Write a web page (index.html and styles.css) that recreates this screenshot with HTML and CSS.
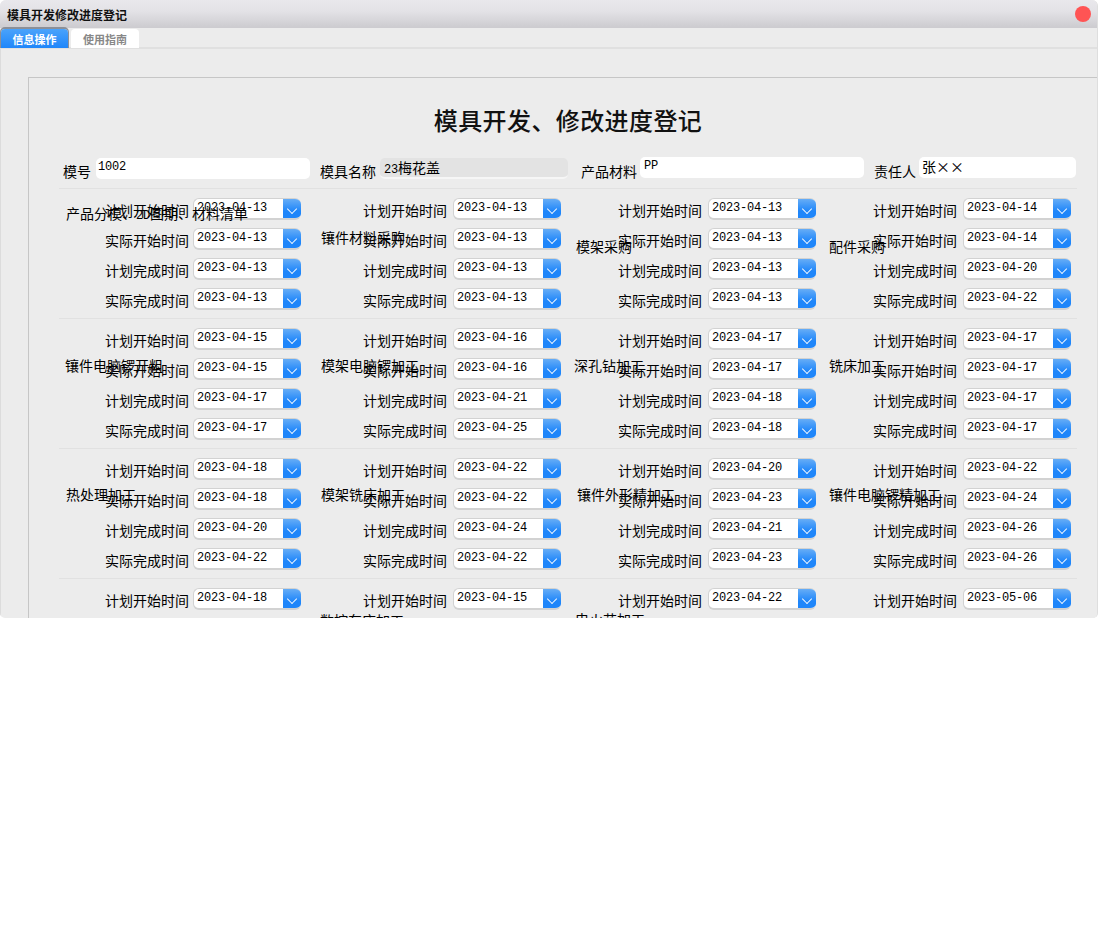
FILE: index.html
```html
<!DOCTYPE html>
<html lang="zh-CN">
<head>
<meta charset="utf-8">
<title>模具开发修改进度登记</title>
<link rel="stylesheet" href="styles.css">
</head>
<body>
<div class="window">
  <header class="titlebar"><span class="title">模具开发修改进度登记</span><span class="close"></span></header>
  <nav class="tabs"><span class="tab active">信息操作</span><span class="tab">使用指南</span></nav>
  <main class="content">
    <section class="sheet">
      <h1 class="heading">模具开发、修改进度登记</h1>
      <div class="meta">
        <div class="field"><span class="field-label">模号</span><span class="input pad2 w214">1002</span></div>
        <div class="field"><span class="field-label">模具名称</span><span class="input readonly w188">23<span class="cjk">梅花盖</span></span></div>
        <div class="field shift"><span class="field-label">产品材料</span><span class="input up w224">PP</span></div>
        <div class="field"><span class="field-label">责任人</span><span class="input up pad3 w157"><span class="cjk">张<span class="wide">××</span></span></span></div>
      </div>

      <div class="group">
        <div class="rows">
          <div class="cell"><span class="label">计划开始时间</span><div class="date"><span class="date-text">2023-04-13</span><span class="date-btn"></span></div></div>
          <div class="cell"><span class="label">计划开始时间</span><div class="date"><span class="date-text">2023-04-13</span><span class="date-btn"></span></div></div>
          <div class="cell"><span class="label">计划开始时间</span><div class="date"><span class="date-text">2023-04-13</span><span class="date-btn"></span></div></div>
          <div class="cell"><span class="label">计划开始时间</span><div class="date"><span class="date-text">2023-04-14</span><span class="date-btn"></span></div></div>
          <div class="cell"><span class="label">实际开始时间</span><div class="date"><span class="date-text">2023-04-13</span><span class="date-btn"></span></div></div>
          <div class="cell"><span class="label">实际开始时间</span><div class="date"><span class="date-text">2023-04-13</span><span class="date-btn"></span></div></div>
          <div class="cell"><span class="label">实际开始时间</span><div class="date"><span class="date-text">2023-04-13</span><span class="date-btn"></span></div></div>
          <div class="cell"><span class="label">实际开始时间</span><div class="date"><span class="date-text">2023-04-14</span><span class="date-btn"></span></div></div>
          <div class="cell"><span class="label">计划完成时间</span><div class="date"><span class="date-text">2023-04-13</span><span class="date-btn"></span></div></div>
          <div class="cell"><span class="label">计划完成时间</span><div class="date"><span class="date-text">2023-04-13</span><span class="date-btn"></span></div></div>
          <div class="cell"><span class="label">计划完成时间</span><div class="date"><span class="date-text">2023-04-13</span><span class="date-btn"></span></div></div>
          <div class="cell"><span class="label">计划完成时间</span><div class="date"><span class="date-text">2023-04-20</span><span class="date-btn"></span></div></div>
          <div class="cell"><span class="label">实际完成时间</span><div class="date"><span class="date-text">2023-04-13</span><span class="date-btn"></span></div></div>
          <div class="cell"><span class="label">实际完成时间</span><div class="date"><span class="date-text">2023-04-13</span><span class="date-btn"></span></div></div>
          <div class="cell"><span class="label">实际完成时间</span><div class="date"><span class="date-text">2023-04-13</span><span class="date-btn"></span></div></div>
          <div class="cell"><span class="label">实际完成时间</span><div class="date"><span class="date-text">2023-04-22</span><span class="date-btn"></span></div></div>
        </div>
        <span class="stage a1">产品分模、<span class="half">2D</span>图期、材料清单</span>
        <span class="stage a2">镶件材料采购</span>
        <span class="stage a3">模架采购</span>
        <span class="stage a4">配件采购</span>
      </div>

      <div class="group">
        <div class="rows">
          <div class="cell"><span class="label">计划开始时间</span><div class="date"><span class="date-text">2023-04-15</span><span class="date-btn"></span></div></div>
          <div class="cell"><span class="label">计划开始时间</span><div class="date"><span class="date-text">2023-04-16</span><span class="date-btn"></span></div></div>
          <div class="cell"><span class="label">计划开始时间</span><div class="date"><span class="date-text">2023-04-17</span><span class="date-btn"></span></div></div>
          <div class="cell"><span class="label">计划开始时间</span><div class="date"><span class="date-text">2023-04-17</span><span class="date-btn"></span></div></div>
          <div class="cell"><span class="label">实际开始时间</span><div class="date"><span class="date-text">2023-04-15</span><span class="date-btn"></span></div></div>
          <div class="cell"><span class="label">实际开始时间</span><div class="date"><span class="date-text">2023-04-16</span><span class="date-btn"></span></div></div>
          <div class="cell"><span class="label">实际开始时间</span><div class="date"><span class="date-text">2023-04-17</span><span class="date-btn"></span></div></div>
          <div class="cell"><span class="label">实际开始时间</span><div class="date"><span class="date-text">2023-04-17</span><span class="date-btn"></span></div></div>
          <div class="cell"><span class="label">计划完成时间</span><div class="date"><span class="date-text">2023-04-17</span><span class="date-btn"></span></div></div>
          <div class="cell"><span class="label">计划完成时间</span><div class="date"><span class="date-text">2023-04-21</span><span class="date-btn"></span></div></div>
          <div class="cell"><span class="label">计划完成时间</span><div class="date"><span class="date-text">2023-04-18</span><span class="date-btn"></span></div></div>
          <div class="cell"><span class="label">计划完成时间</span><div class="date"><span class="date-text">2023-04-17</span><span class="date-btn"></span></div></div>
          <div class="cell"><span class="label">实际完成时间</span><div class="date"><span class="date-text">2023-04-17</span><span class="date-btn"></span></div></div>
          <div class="cell"><span class="label">实际完成时间</span><div class="date"><span class="date-text">2023-04-25</span><span class="date-btn"></span></div></div>
          <div class="cell"><span class="label">实际完成时间</span><div class="date"><span class="date-text">2023-04-18</span><span class="date-btn"></span></div></div>
          <div class="cell"><span class="label">实际完成时间</span><div class="date"><span class="date-text">2023-04-17</span><span class="date-btn"></span></div></div>
        </div>
        <span class="stage b1">镶件电脑锣开粗</span>
        <span class="stage b2">模架电脑锣加工</span>
        <span class="stage b3">深孔钻加工</span>
        <span class="stage b4">铣床加工</span>
      </div>

      <div class="group">
        <div class="rows">
          <div class="cell"><span class="label">计划开始时间</span><div class="date"><span class="date-text">2023-04-18</span><span class="date-btn"></span></div></div>
          <div class="cell"><span class="label">计划开始时间</span><div class="date"><span class="date-text">2023-04-22</span><span class="date-btn"></span></div></div>
          <div class="cell"><span class="label">计划开始时间</span><div class="date"><span class="date-text">2023-04-20</span><span class="date-btn"></span></div></div>
          <div class="cell"><span class="label">计划开始时间</span><div class="date"><span class="date-text">2023-04-22</span><span class="date-btn"></span></div></div>
          <div class="cell"><span class="label">实际开始时间</span><div class="date"><span class="date-text">2023-04-18</span><span class="date-btn"></span></div></div>
          <div class="cell"><span class="label">实际开始时间</span><div class="date"><span class="date-text">2023-04-22</span><span class="date-btn"></span></div></div>
          <div class="cell"><span class="label">实际开始时间</span><div class="date"><span class="date-text">2023-04-23</span><span class="date-btn"></span></div></div>
          <div class="cell"><span class="label">实际开始时间</span><div class="date"><span class="date-text">2023-04-24</span><span class="date-btn"></span></div></div>
          <div class="cell"><span class="label">计划完成时间</span><div class="date"><span class="date-text">2023-04-20</span><span class="date-btn"></span></div></div>
          <div class="cell"><span class="label">计划完成时间</span><div class="date"><span class="date-text">2023-04-24</span><span class="date-btn"></span></div></div>
          <div class="cell"><span class="label">计划完成时间</span><div class="date"><span class="date-text">2023-04-21</span><span class="date-btn"></span></div></div>
          <div class="cell"><span class="label">计划完成时间</span><div class="date"><span class="date-text">2023-04-26</span><span class="date-btn"></span></div></div>
          <div class="cell"><span class="label">实际完成时间</span><div class="date"><span class="date-text">2023-04-22</span><span class="date-btn"></span></div></div>
          <div class="cell"><span class="label">实际完成时间</span><div class="date"><span class="date-text">2023-04-22</span><span class="date-btn"></span></div></div>
          <div class="cell"><span class="label">实际完成时间</span><div class="date"><span class="date-text">2023-04-23</span><span class="date-btn"></span></div></div>
          <div class="cell"><span class="label">实际完成时间</span><div class="date"><span class="date-text">2023-04-26</span><span class="date-btn"></span></div></div>
        </div>
        <span class="stage c1">热处理加工</span>
        <span class="stage c2">模架铣床加工</span>
        <span class="stage c3">镶件外形精加工</span>
        <span class="stage c4">镶件电脑锣精加工</span>
      </div>

      <div class="group">
        <div class="rows">
          <div class="cell"><span class="label">计划开始时间</span><div class="date"><span class="date-text">2023-04-18</span><span class="date-btn"></span></div></div>
          <div class="cell"><span class="label">计划开始时间</span><div class="date"><span class="date-text">2023-04-15</span><span class="date-btn"></span></div></div>
          <div class="cell"><span class="label">计划开始时间</span><div class="date"><span class="date-text">2023-04-22</span><span class="date-btn"></span></div></div>
          <div class="cell"><span class="label">计划开始时间</span><div class="date"><span class="date-text">2023-05-06</span><span class="date-btn"></span></div></div>
        </div>
        <span class="stage d2">数控车床加工</span>
        <span class="stage d3">电火花加工</span>
      </div>
    </section>
  </main>
</div>
</body>
</html>
```
FILE: styles.css
```css
* { box-sizing: border-box; }
html, body { margin: 0; padding: 0; background: #fff; }
body { font-family: "Noto Sans CJK SC", "Liberation Sans", sans-serif; color: #000; }

.window { width: 1098px; height: 618px; overflow: hidden; background: #ececec; border-right: 1px solid #dedede; border-radius: 6px 6px 5px 5px; display: flex; flex-direction: column; }

.titlebar { height: 28px; flex: none; display: flex; align-items: center; justify-content: space-between; padding: 0 6px 0 7px; background: linear-gradient(#e9e8ec, #e3e2e6 40%, #cccbcf); }
.title { font-size: 12px; font-weight: 700; color: #111; }
.close { width: 16px; height: 16px; border-radius: 50%; background: #ff5454; }

.tabs { height: 21px; flex: none; display: flex; gap: 3px; padding: 1px 0 0 1px; border-bottom: 2px solid #e0e0e0; }
.tab { width: 68px; height: 19px; background: #fff; border-radius: 4px 4px 0 0; color: #888; font-size: 11px; font-weight: 700; text-align: center; line-height: 20px; }
.tab.active { width: 67px; background: linear-gradient(#4aa3fb, #1f86fa); color: #fff; box-shadow: 0 -1px 0 1px #8b8f98; }

.content { flex: 1; min-height: 0; padding: 28px 0 0 27px; border-left: 1px solid #dcdcdc; }
.sheet { height: 600px; border: 1px solid #c6c6c6; border-right: 0; background: #ececec; padding: 0 20px 0 30px; }
.heading { margin: 23px 0 0; height: 38px; font-size: 24px; line-height: 38px; font-weight: 500; letter-spacing: 0.4px; text-align: center; color: #111; }

.meta { height: 50px; padding: 19px 0 0 4px; display: grid; grid-template-columns: 247px 248px 286px 202px; column-gap: 10px; border-bottom: 1px solid #e1e1e1; }
.field { display: flex; justify-content: space-between; align-items: flex-start; }
.field.shift { margin-left: 3px; }
.field-label { font-size: 14px; line-height: 20px; margin-top: 3px; white-space: nowrap; }
.input { height: 21px; border-radius: 5px; background: #fff; font: 12px/18px "Liberation Mono", monospace; letter-spacing: -0.2px; padding-left: 4px; white-space: nowrap; }
.input.pad2 { padding-left: 2px; }
.input.pad3 { padding-left: 3px; }
.input.up { margin-top: -1px; }
.input.readonly { background: #e3e3e3; border-bottom: 2px solid #f6f6f6; }
.w214 { width: 214px; }
.w188 { width: 188px; }
.w224 { width: 224px; }
.w157 { width: 157px; }
.cjk { font: 14px/18px "Noto Sans CJK SC", sans-serif; letter-spacing: 0; }
.wide { letter-spacing: 0; }

.group { height: 130px; position: relative; padding-top: 9px; border-bottom: 1px solid #e1e1e1; }
.rows { display: grid; grid-template-columns: 242px 260px 255px 255px; grid-auto-rows: 30px; }
.cell { display: flex; align-items: flex-start; justify-content: flex-end; gap: 6px; }
.cell:nth-child(4n+1) { gap: 4px; }
.label { font-size: 14px; line-height: 20px; margin-top: 2px; white-space: nowrap; }
.date { width: 108px; height: 22px; flex: none; display: flex; border: 1px solid #d2d2d2; border-bottom-width: 2px; border-right: 0; border-radius: 6px; overflow: hidden; background: #fff; }
.date-text { flex: 1; font: 12px/18px "Liberation Mono", monospace; letter-spacing: -0.2px; padding-left: 3px; }
.date-btn { width: 18px; height: 22px; margin-top: -1px; position: relative; background: linear-gradient(#6cb0f6, #1f86fa 60%); }
.date-btn::after { content: ""; position: absolute; left: 5px; top: 7px; width: 7px; height: 7px; border-right: 1.5px solid #fff; border-bottom: 1.5px solid #fff; transform: rotate(45deg) scale(0.9); }

.stage { position: absolute; font-size: 14px; line-height: 20px; white-space: nowrap; }
.half { font: 12px/20px "Liberation Mono", monospace; letter-spacing: -0.2px; }
.a1 { left: 7px; top: 14px; }
.a2 { left: 262px; top: 38px; }
.a3 { left: 517px; top: 47px; }
.a4 { left: 770px; top: 47px; }
.b1 { left: 6px; top: 36px; }
.b2 { left: 262px; top: 36px; }
.b3 { left: 515px; top: 36px; }
.b4 { left: 770px; top: 36px; }
.c1 { left: 7px; top: 35px; }
.c2 { left: 262px; top: 35px; }
.c3 { left: 518px; top: 35px; }
.c4 { left: 770px; top: 35px; }
.d2 { left: 261px; top: 31px; }
.d3 { left: 516px; top: 30px; }
```
